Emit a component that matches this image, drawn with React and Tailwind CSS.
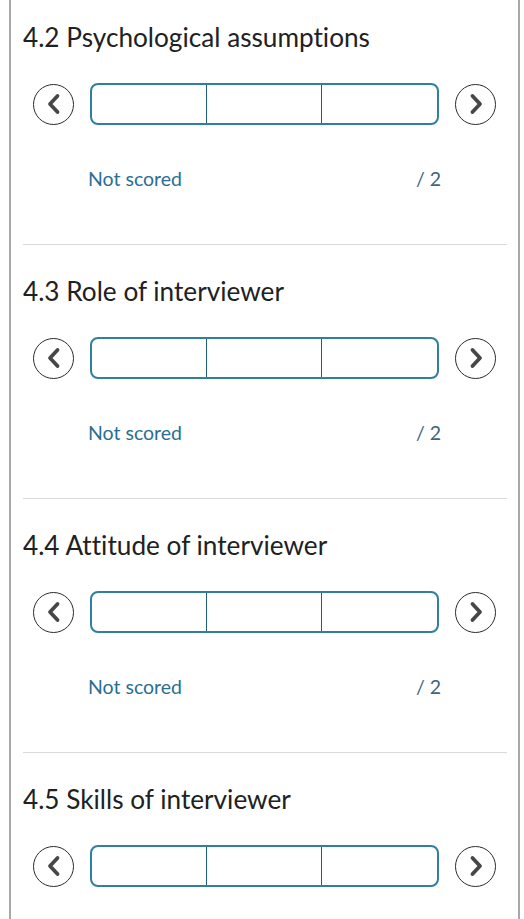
import React from 'react';

const criteria = [
    '4.2 Psychological assumptions',
    '4.3 Role of interviewer',
    '4.4 Attitude of interviewer',
    '4.5 Skills of interviewer',
];

function Arrow({ dir }) {
    return (
        <button className="w-[41px] h-[41px] shrink-0 rounded-full border-[1.5px] border-[#2b2b2b] flex items-center justify-center bg-white">
            <svg width="20" height="24" viewBox="0 0 20 24">
                {dir === 'left' ? (
                    <path d="M13.5 4 L6 12 L13.5 20" fill="none" stroke="#474747" strokeWidth="3.8" strokeLinecap="round" strokeLinejoin="round" />
                ) : (
                    <path d="M6.5 4 L14 12 L6.5 20" fill="none" stroke="#474747" strokeWidth="3.8" strokeLinecap="round" strokeLinejoin="round" />
                )}
            </svg>
        </button>
    );
}

function Criterion({ title, last }) {
    return (
        <div className={last ? '' : 'border-b border-[#d6dadd]'}>
            <h3 className="text-[26.2px] leading-[32px] text-[#202122] [font-variant-ligatures:none]">{title}</h3>
            <div className="flex items-center gap-4 pl-[10px] mt-[30px]">
                <Arrow dir="left" />
                <div className="w-[349px] h-[42px] rounded-lg border-2 border-[#2f7f9e] grid grid-cols-3 overflow-hidden">
                    <div className="border-r-[1.5px] border-[#1f5f7c]"></div>
                    <div className="border-r-[1.5px] border-[#1f5f7c]"></div>
                    <div></div>
                </div>
                <Arrow dir="right" />
            </div>
            {!last && (
                <div className="flex justify-between w-[353px] ml-[65px] mt-[41px] mb-[52px] text-[19.5px] leading-[26px]">
                    <span className="text-[#2a6f92]">Not scored</span>
                    <span className="text-[#3b6682]">/ 2</span>
                </div>
            )}
        </div>
    );
}

export default function App() {
    return (
        <div className="min-h-[919px] bg-white" style={{ fontFamily: 'Lato, "Open Sans", sans-serif' }}>
            <div className="ml-[9px] w-[511px] min-h-[919px] border-x-2 border-[#a9a9a9] pl-[12px] pr-[11px] pt-[21px] space-y-[30px]">
                {criteria.map((c, i) => (
                    <Criterion key={c} title={c} last={i === criteria.length - 1} />
                ))}
            </div>
        </div>
    );
}
